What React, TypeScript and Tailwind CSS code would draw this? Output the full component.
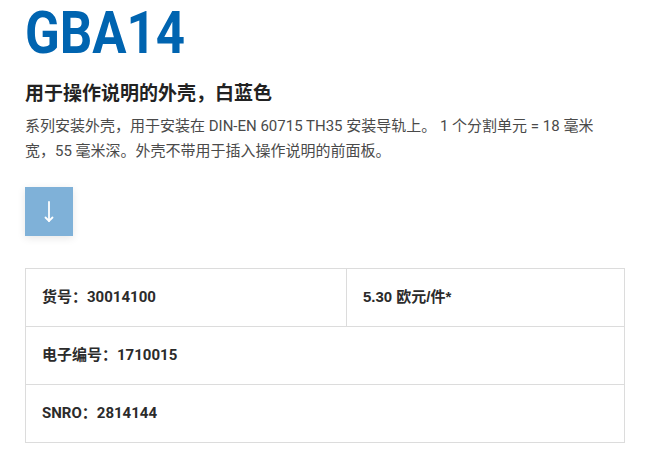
// 제품 상세 — GBA14 하우징 카드
const cjk = "font-['Roboto','Noto_Sans_CJK_SC',sans-serif]"

function SpecCell({ children, className = '' }: { children: React.ReactNode; className?: string }) {
  return (
    <div className={`flex h-[57px] items-center px-[16px] text-[15px] font-bold text-[#2b2b2b] ${className}`}>
      {children}
    </div>
  )
}

export default function App() {
  return (
    <div className={`min-h-[469px] bg-white px-[25px] pt-[3px] ${cjk}`}>
      <h1 className="origin-left scale-x-[0.85] text-[60px] leading-[60px] font-bold text-[#0064b0]">
        GBA14
      </h1>

      <h2 className="mt-[17px] text-[19px] leading-[27px] font-bold text-[#222]">
        用于操作说明的外壳，白蓝色
      </h2>
      <p className="mt-[7px] text-[15px] leading-[25px] text-[#4a4a4a]">
        系列安装外壳，用于安装在 DIN-EN 60715 TH35 安装导轨上。 1 个分割单元 = 18 毫米
        宽，55 毫米深。外壳不带用于插入操作说明的前面板。
      </p>

      <button
        type="button"
        className="mt-[23px] flex h-[49px] w-[48px] items-center justify-center bg-[#7fb1d8] shadow-[0_2px_8px_rgba(0,0,0,0.10)]"
        aria-label="下载"
      >
        <svg width="12" height="22" viewBox="0 0 12 22" fill="none" stroke="white" strokeWidth="1.8" strokeLinecap="round">
          <path d="M6 1v19" />
          <path d="M2.5 16.5L6 20l3.5-3.5" />
        </svg>
      </button>

      {/* 规格表 */}
      <div className="mt-[32px] w-[600px] border border-[#dcdcdc]">
        <div className="grid grid-cols-[321px_1fr] border-b border-[#dcdcdc]">
          <SpecCell className="border-r border-[#dcdcdc]">货号：30014100</SpecCell>
          <SpecCell className="font-['Liberation_Sans','Noto_Sans_CJK_SC',sans-serif]">
            5.30 欧元/件*
          </SpecCell>
        </div>
        <div className="border-b border-[#dcdcdc]">
          <SpecCell>电子编号：1710015</SpecCell>
        </div>
        <SpecCell>SNRO：2814144</SpecCell>
      </div>
    </div>
  )
}
